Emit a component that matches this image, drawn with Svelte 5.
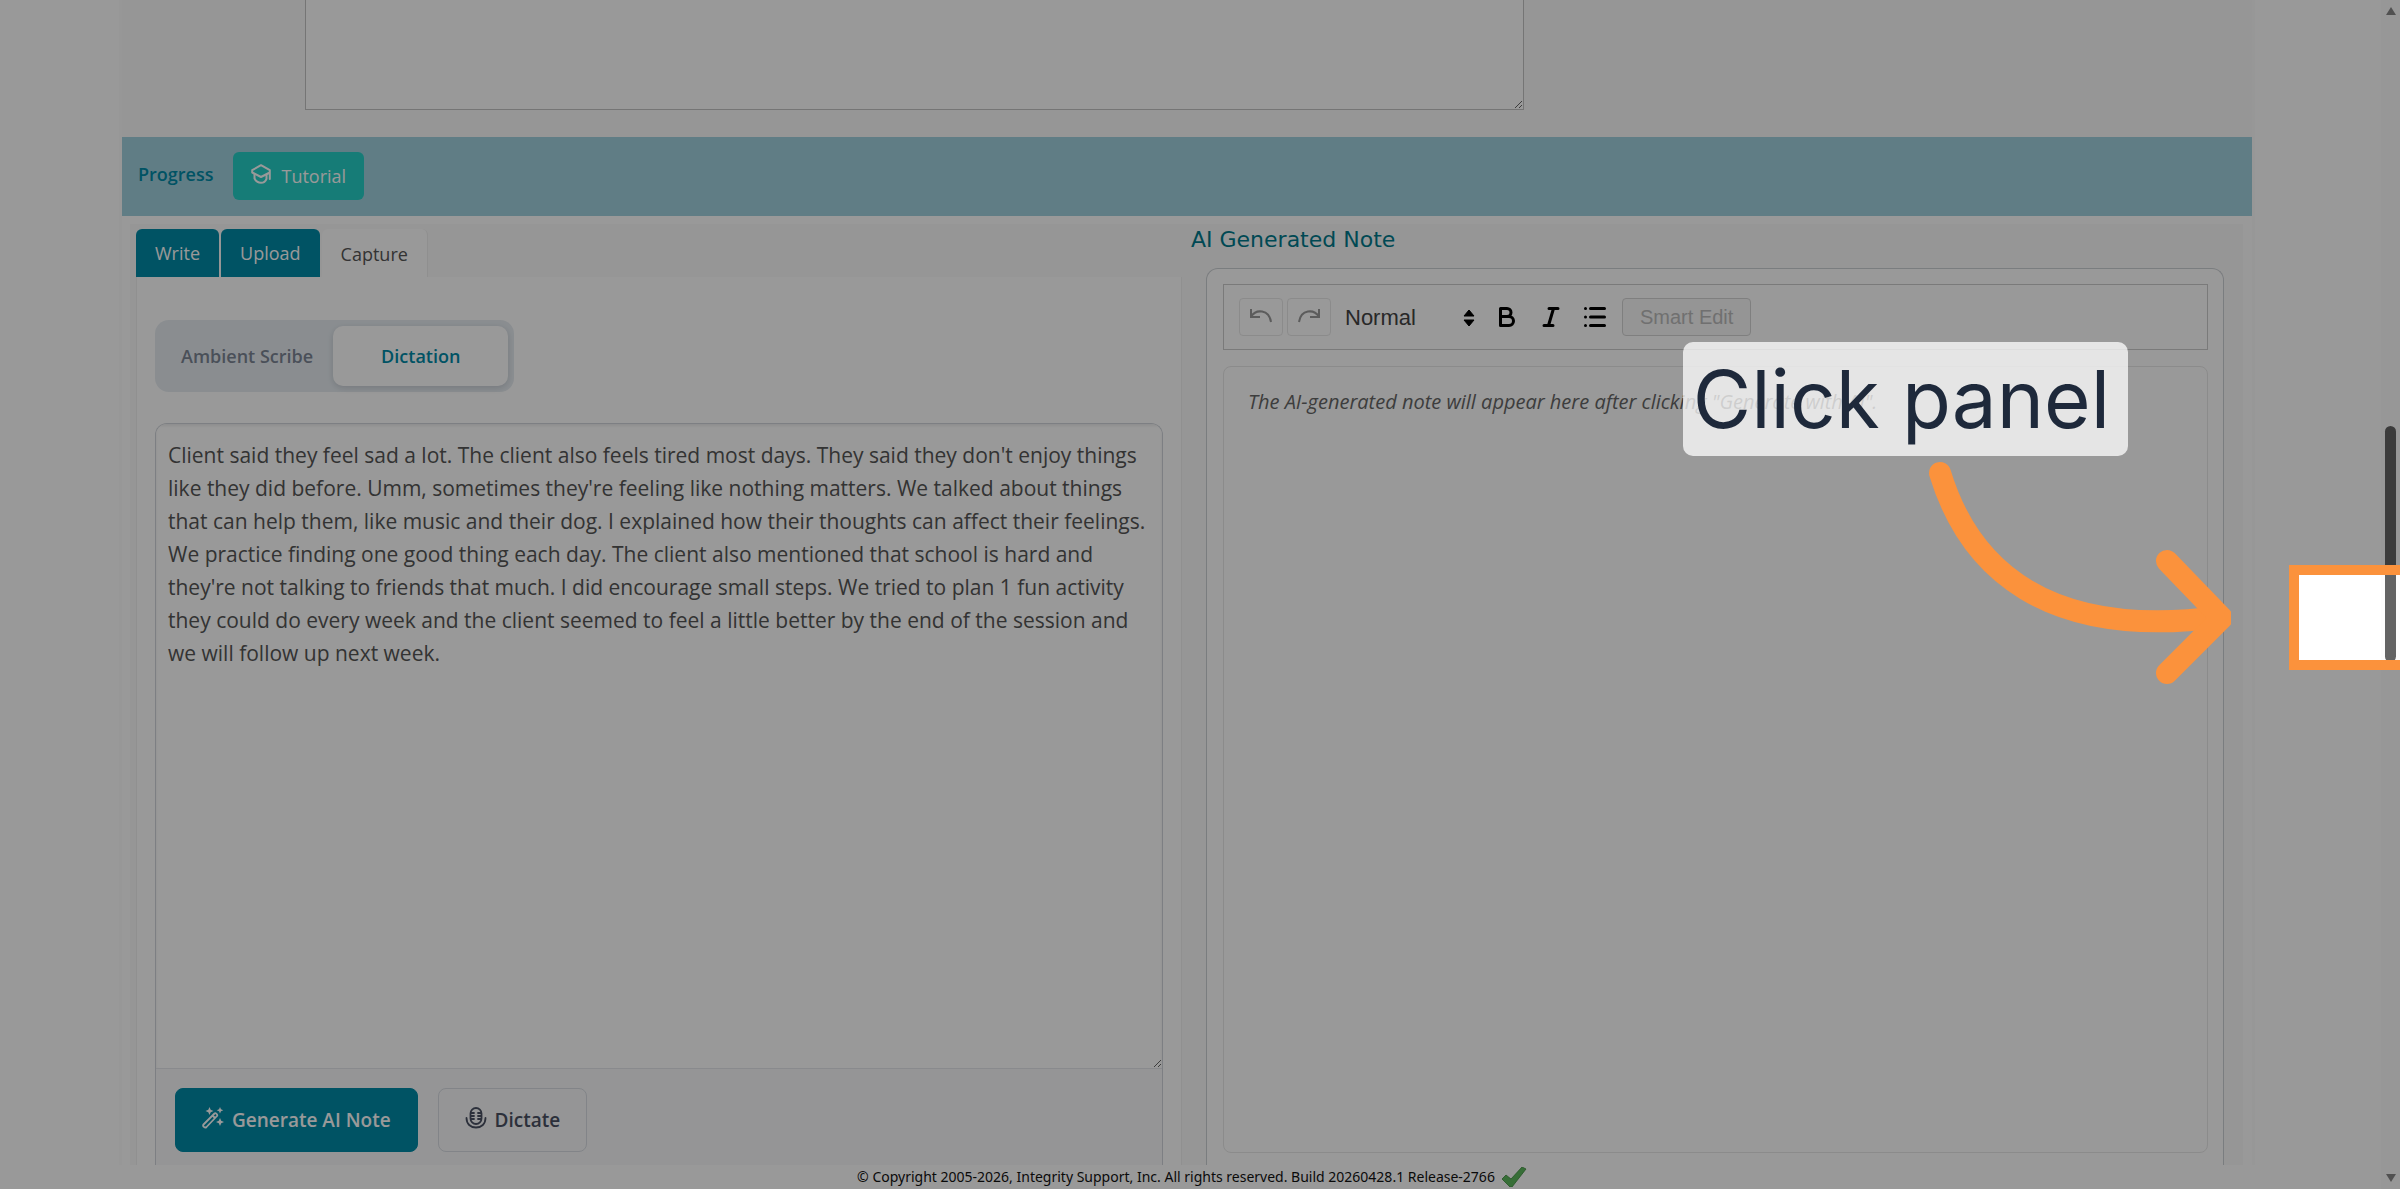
<script>
  let note = $state(
    "Client said they feel sad a lot. The client also feels tired most days. They said they don't enjoy things like they did before. Umm, sometimes they're feeling like nothing matters. We talked about things that can help them, like music and their dog. I explained how their thoughts can affect their feelings. We practice finding one good thing each day. The client also mentioned that school is hard and they're not talking to friends that much. I did encourage small steps. We tried to plan 1 fun activity they could do every week and the client seemed to feel a little better by the end of the session and we will follow up next week."
  );

  let tab = $state('Capture');
  let mode = $state('Dictation');

  const tabs = ['Write', 'Upload', 'Capture'];
  const modes = ['Ambient Scribe', 'Dictation'];
</script>

<div class="page">
  <div class="sheet">
    <div class="previous">
      <textarea class="previous__input" aria-label="Previous section"></textarea>
    </div>

    <header class="bar">
      <span class="bar__title">Progress</span>
      <button class="tutorial">
        <svg width="20" height="20" viewBox="0 0 20 20" fill="none" stroke="currentColor" stroke-width="2" stroke-linejoin="round" stroke-linecap="round">
          <path d="M10 1.2 18.8 6.2V15M10 1.2 1.2 6.2v2.300L10 13l8.800-4.500" />
          <path d="M3.500 10v4.500c1.500 3 4 4.300 6.500 4.300s4.500-1.300 5.500-4V10.500" />
        </svg>
        Tutorial
      </button>
    </header>

    <main class="columns">
      <section class="left">
        <nav class="tabs">
          {#each tabs as name}
            <button class="tab" class:tab--open={tab === name} onclick={() => (tab = name)}>{name}</button>
          {/each}
        </nav>

        <div class="capture">
          <div class="switch">
            {#each modes as name}
              <button class="switch__item" class:switch__item--on={mode === name} onclick={() => (mode = name)}>{name}</button>
            {/each}
          </div>

          <div class="dictation">
            <textarea class="dictation__input" aria-label="Dictation" spellcheck="false" bind:value={note}></textarea>
            <div class="actions">
              <button class="btn btn--primary">
                <svg width="22" height="22" viewBox="0 0 22 22" fill="none" stroke="currentColor" stroke-width="1.8" stroke-linejoin="round">
                  <path d="M1.500 17.500 12.500 6.500c1-1 3.500 1 2.500 2.500L4.500 20c-1.500 1.500-4.500-1-3-2.500zM10.500 8.500l2.500 2.500" />
                  <path d="M7.500 0l1.200 2.800L11.500 4 8.700 5.200 7.500 8 6.300 5.200 3.500 4l2.800-1.200zM18 0l1 2.300 2.300 1-2.300 1-1 2.300-1-2.300-2.300-1 2.300-1zM18 11l1.200 2.800L22 15l-2.800 1.200L18 19l-1.200-2.800L14 15l2.800-1.200z" fill="currentColor" stroke="none" />
                </svg>
                Generate AI Note
              </button>
              <button class="btn">
                <svg width="22" height="22" viewBox="0 0 22 22" fill="none" stroke="currentColor" stroke-width="1.8" stroke-linecap="round">
                  <rect x="5.500" y="1" width="11" height="16" rx="5.500" />
                  <path d="M1.500 11c0 6 4 9.500 9.500 9.500s9.500-3.500 9.500-9.500M6 6h3M6 9h3M6 12h3M13 6h3M13 9h3M13 12h3" />
                </svg>
                Dictate
              </button>
            </div>
          </div>
        </div>
      </section>

      <section class="right">
        <h2 class="right__title">AI Generated Note</h2>
        <div class="note">
          <div class="toolbar">
            <button class="tool tool--boxed" aria-label="Undo">
              <svg width="24" height="20" viewBox="0 0 24 20" fill="none" stroke="currentColor" stroke-width="2">
                <path d="M2 2v8h9M2 9.500C7 2 20 2 22 15" />
              </svg>
            </button>
            <button class="tool tool--boxed" aria-label="Redo">
              <svg width="24" height="20" viewBox="0 0 24 20" fill="none" stroke="currentColor" stroke-width="2">
                <path d="M22 2v8h-9M22 9.500C17 2 4 2 2 15" />
              </svg>
            </button>
            <div class="format">
              <select class="format__select" aria-label="Text style">
                <option>Normal</option>
                <option>Heading</option>
              </select>
              <svg class="format__arrows" width="12" height="18" viewBox="0 0 12 18">
                <path d="M6 1 11 7H1zM6 17 1 11h10z" fill="#000" stroke="#000" stroke-linejoin="round" />
              </svg>
            </div>
            <button class="tool" aria-label="Bold">
              <svg width="20" height="22" viewBox="0 0 20 22" fill="none" stroke="#000" stroke-width="3" stroke-linejoin="round">
                <path d="M3.500 2.500H10a4 4 0 0 1 0 8H3.500zM3.500 10.500H12a4.300 4.300 0 0 1 0 9H3.500z" />
              </svg>
            </button>
            <button class="tool" aria-label="Italic">
              <svg width="20" height="22" viewBox="0 0 20 22" fill="none" stroke="#000" stroke-width="3" stroke-linecap="round">
                <path d="M8 2.500h9M3 19.500h9M12.500 2.500l-5 17" />
              </svg>
            </button>
            <button class="tool" aria-label="Bullet list">
              <svg width="24" height="22" viewBox="0 0 24 22" fill="none" stroke="#000" stroke-width="3" stroke-linecap="round">
                <path d="M7.500 2.500h14M7.500 11h14M7.500 19.500h14M2.500 2.500h0M2.500 11h0M2.500 19.500h0" />
              </svg>
            </button>
            <button class="smart" disabled>Smart Edit</button>
          </div>
          <div class="editor">
            <p>The AI-generated note will appear here after clicking "Generate with AI".</p>
          </div>
        </div>
      </section>
    </main>
  </div>

  <footer class="footer">
    © Copyright 2005-2026, Integrity Support, Inc. All rights reserved. Build 20260428.1 Release-2766
    <svg width="26" height="20" viewBox="0 0 26 20">
      <path d="M1 12 5 8l5 4L21 0l4 2L11 20H9z" fill="#5cb85c" stroke="#3d8b3d" stroke-width=".8" />
    </svg>
  </footer>

  <div class="scrollbar">
    <svg width="12" height="10" viewBox="0 0 12 10"><path d="M6 1l5 8H1z" fill="#888" /></svg>
    <div class="scrollbar__thumb"></div>
    <svg width="12" height="10" viewBox="0 0 12 10"><path d="M6 9 1 1h10z" fill="#888" /></svg>
  </div>

  <!-- walkthrough step drawn over the page -->
  <div class="guide">
    <div class="guide__target"></div>
    <div class="guide__label">Click panel</div>
    <svg class="guide__arrow" width="310" height="240" viewBox="1920 450 310 240" fill="none" stroke="#fb923c" stroke-width="22" stroke-linecap="round" stroke-linejoin="round">
      <path d="M1939 473C1968 568 2045 640 2219 617" />
      <path d="M2166 561 2221 618 2166 673" />
    </svg>
  </div>
</div>

<style>
  :global(body) {
    margin: 0;
    background: #fff;
  }

  .page {
    position: relative;
    display: flex;
    flex-direction: column;
    height: 100vh;
    overflow: hidden;
    font-family: "Open Sans", "Noto Sans", sans-serif;
    font-size: 18px;
    color: #444;
  }

  button,
  textarea,
  select {
    box-sizing: border-box;
    font: inherit;
    color: inherit;
  }

  button {
    display: flex;
    align-items: center;
    justify-content: center;
    padding: 0;
    border: 0;
    background: none;
    cursor: pointer;
  }

  .sheet {
    flex: 1;
    display: flex;
    flex-direction: column;
    min-height: 0;
    margin: 0 145px 0 119px;
    border: solid #fcfcfc;
    border-width: 0 3px;
    overflow: hidden;
  }

  .previous {
    flex: none;
    height: 137px;
    padding-left: 183px;
    box-sizing: border-box;
    background: #fafafa;
  }

  .previous__input {
    display: block;
    width: 1219px;
    height: 110px;
    border: 1px solid #c4c4c4;
    border-top: 0;
    background: #fff;
  }

  .bar {
    flex: none;
    display: flex;
    align-items: center;
    gap: 20px;
    height: 79px;
    padding: 0 16px 2px;
    box-sizing: border-box;
    background: #a0d0de;
  }

  .bar__title {
    font-weight: 600;
    color: #008aa7;
    padding-bottom: 4px;
  }

  .tutorial {
    gap: 10px;
    height: 48px;
    padding: 0 18px;
    border-radius: 6px;
    background: #26cfc6;
    color: #fff;
  }

  .tutorial svg {
    margin-bottom: 4px;
  }

  .columns {
    flex: 1;
    display: flex;
    gap: 9px;
    min-height: 0;
    margin: 8px 9px 0 8px;
    padding: 5px 19px 0 6px;
    background: #fafafa;
  }

  .left {
    flex: 1045;
    display: flex;
    flex-direction: column;
    min-width: 0;
  }

  .tabs {
    display: flex;
    gap: 2px;
  }

  .tab {
    height: 48px;
    padding: 0 19px;
    border-radius: 6px 6px 0 0;
    background: #008aa7;
    color: #fff;
  }

  .tab--open {
    padding-top: 2px;
    border-right: 1px solid #eee;
    background: #fff;
    color: #555;
  }

  .capture {
    flex: 1;
    display: flex;
    flex-direction: column;
    min-height: 0;
    padding: 43px 18px 0;
    border: solid #f0f0f0;
    border-width: 0 1px;
    background: #fff;
  }

  .switch {
    display: flex;
    align-self: flex-start;
    flex: none;
    height: 72px;
    padding: 6px;
    box-sizing: border-box;
    border-radius: 14px;
    background: #e6ecf1;
    font-weight: 600;
  }

  .switch__item {
    padding: 0 20px;
    border-radius: 10px;
    color: #7c8594;
  }

  .switch__item--on {
    padding: 0 48px;
    background: #fff;
    color: #008aa7;
    box-shadow: 0 2px 6px rgba(15, 23, 42, 0.15);
  }

  .dictation {
    flex: 1;
    display: flex;
    flex-direction: column;
    min-height: 0;
    margin-top: 31px;
    border: 1px solid #d0d4da;
    border-bottom: 0;
    border-radius: 12px 12px 0 0;
    background: #f8f9fa;
    overflow: hidden;
  }

  .dictation__input {
    flex: 1;
    width: 100%;
    padding: 15px 12px;
    border: 0;
    border-bottom: 1px solid #e5e7eb;
    background: #fff;
    font-size: 21px;
    line-height: 33px;
    color: #555;
    outline: none;
    box-shadow: inset 0 2px 3px rgba(15, 23, 42, 0.08);
  }

  .actions {
    flex: none;
    display: flex;
    gap: 20px;
    padding: 19px 19px 13px;
  }

  .btn {
    gap: 8px;
    height: 64px;
    padding: 0 26px;
    border: 1px solid #d9dce3;
    border-radius: 8px;
    font-size: 19px;
    font-weight: 600;
    color: #4a5063;
  }

  .btn svg {
    margin-bottom: 4px;
  }

  .btn--primary {
    border-color: #008aa7;
    background: #008aa7;
    color: #fff;
  }

  .right {
    flex: 1032;
    display: flex;
    flex-direction: column;
    min-width: 0;
  }

  .right__title {
    margin: 0 0 17px;
    font: 22px/22px "DejaVu Sans", sans-serif;
    color: #007a8c;
  }

  .note {
    flex: 1;
    display: flex;
    flex-direction: column;
    min-height: 0;
    margin-left: 15px;
    padding: 15px 15px 12px 16px;
    border: 1px solid #ccd0d4;
    border-bottom: 0;
    border-radius: 12px 12px 0 0;
    background: #fff;
  }

  .toolbar {
    flex: none;
    display: flex;
    align-items: center;
    height: 66px;
    padding: 0 15px;
    box-sizing: border-box;
    border: 1px solid #ccc;
    font-family: "Liberation Sans", Arial, sans-serif;
    font-size: 20px;
  }

  .tool {
    width: 44px;
    height: 38px;
    border-radius: 4px;
  }

  .tool--boxed {
    margin-right: 4px;
    border: 1px solid #e8e8e8;
    color: #999;
  }

  .format {
    position: relative;
    width: 150px;
    padding-left: 10px;
    box-sizing: border-box;
  }

  .format__select {
    width: 100%;
    padding: 0;
    border: 0;
    background: none;
    appearance: none;
    font-size: 22px;
    font-weight: 500;
    color: #444;
  }

  .format__arrows {
    position: absolute;
    right: 10px;
    top: 4px;
    pointer-events: none;
  }

  .smart {
    height: 38px;
    margin-left: 5px;
    padding: 0 17px;
    border: 1px solid #d4d4d4;
    border-radius: 4px;
    background: #f8f8f8;
    color: #bbb;
  }

  .editor {
    flex: 1;
    margin-top: 16px;
    padding: 22px 24px;
    border: 1px solid #e8e8e8;
    border-radius: 8px;
    font-size: 20px;
    font-style: italic;
    color: #666;
  }

  .editor p {
    margin: 0;
    line-height: 26px;
  }

  .footer {
    flex: none;
    display: flex;
    align-items: center;
    justify-content: center;
    gap: 6px;
    height: 24px;
    padding-right: 16px;
    background: #fff;
    font-family: "Noto Sans", sans-serif;
    font-size: 14px;
    line-height: 22px;
    color: #111;
  }

  .scrollbar {
    position: absolute;
    top: 0;
    right: 0;
    bottom: 0;
    display: flex;
    flex-direction: column;
    align-items: center;
    justify-content: space-between;
    width: 19px;
    padding: 6px 0;
    box-sizing: border-box;
    background: #fcfcfc;
  }

  .scrollbar__thumb {
    flex: none;
    width: 11px;
    height: 236px;
    margin-bottom: 102px;
    border-radius: 6px;
    background: #636363;
  }

  .guide {
    position: absolute;
    inset: 0;
    overflow: hidden;
    pointer-events: none;
  }

  .guide__target {
    position: absolute;
    top: 565px;
    right: -10px;
    width: 101px;
    height: 85px;
    border: 10px solid #fb923c;
    box-shadow: 0 0 0 3000px rgba(0, 0, 0, 0.4);
  }

  .guide__label {
    position: absolute;
    top: 342px;
    right: 272px;
    padding: 0 18px 0 10px;
    border-radius: 10px;
    background: rgba(255, 255, 255, 0.75);
    font: 80px/114px Inter, sans-serif;
    color: #1e293b;
    white-space: nowrap;
  }

  .guide__arrow {
    position: absolute;
    top: 450px;
    right: 169px;
  }
</style>
